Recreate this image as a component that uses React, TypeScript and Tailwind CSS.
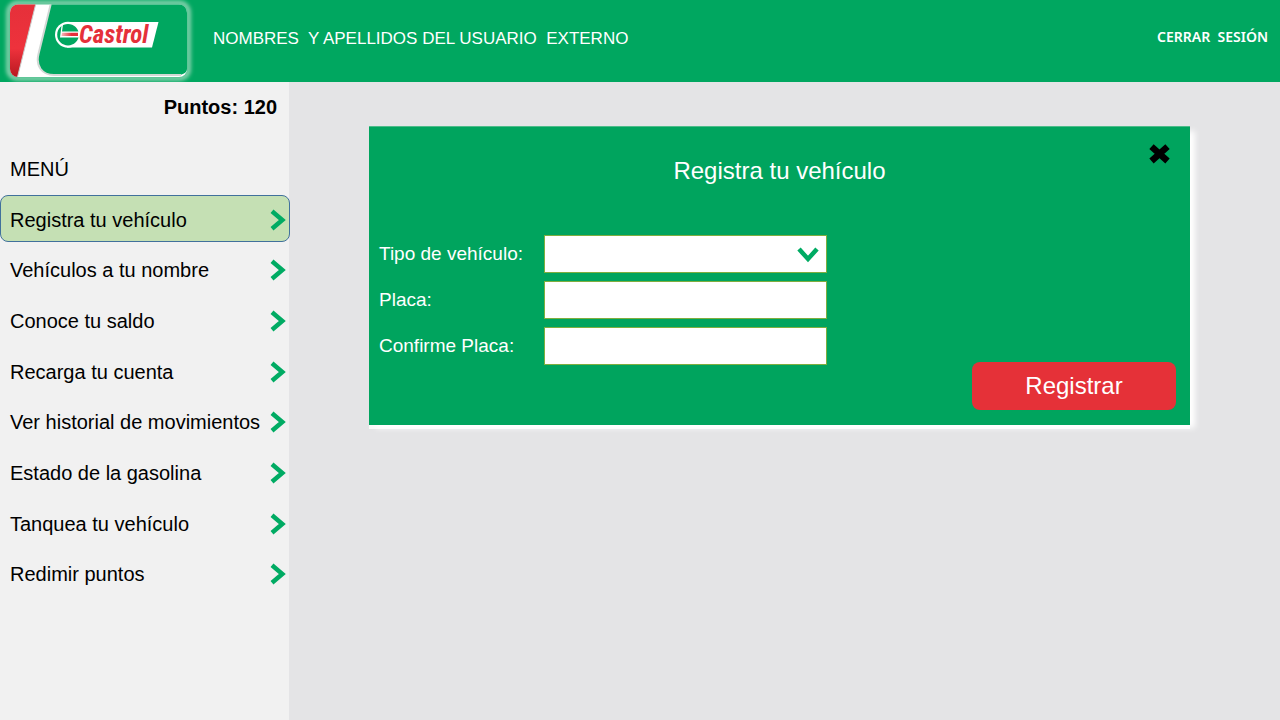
import { useState } from "react";

const menuItems = [
  "Registra tu vehículo",
  "Vehículos a tu nombre",
  "Conoce tu saldo",
  "Recarga tu cuenta",
  "Ver historial de movimientos",
  "Estado de la gasolina",
  "Tanquea tu vehículo",
  "Redimir puntos",
];

function Logo() {
  return (
    <svg width="200" height="82" viewBox="0 0 200 82" role="img" aria-label="Castrol">
      <defs>
        <linearGradient id="red" x1="0" y1="0" x2="0" y2="1">
          <stop offset="0" stopColor="#e5303a" />
          <stop offset="0.6" stopColor="#ee323c" />
          <stop offset="1" stopColor="#b5171f" />
        </linearGradient>
        <linearGradient id="bar" x1="0" y1="0" x2="1" y2="0">
          <stop offset="0" stopColor="#f6b9bc" />
          <stop offset="0.6" stopColor="#e5303a" />
        </linearGradient>
        <filter id="glow" x="-10%" y="-20%" width="120%" height="140%">
          <feGaussianBlur stdDeviation="2" />
        </filter>
        <clipPath id="badge">
          <rect x="10" y="4.5" width="177" height="72.500" rx="8" />
        </clipPath>
      </defs>
      <rect x="8.500" y="3" width="180" height="75.500" rx="9" fill="none" stroke="#b9e2cc" strokeWidth="3.500" filter="url(#glow)" />
      <g clipPath="url(#badge)">
        <rect x="10" y="4" width="178" height="74" fill="#fff" />
        <path d="M8 3H36L17 79H8Z" fill="url(#red)" />
        <path d="M36 3L17 79" stroke="#c9cccb" strokeWidth="1" />
        <path d="M51 3L38.500 54C35.500 66 42 75 54 75H179Q188 74 188 66V3Z" fill="#00a760" />
        <path d="M51 3L38.500 54C35.500 66 42 75 54 75H181" fill="none" stroke="#d3d8d5" strokeWidth="2" />
      </g>
      <path d="M67 22H158.500L152 47.500H67Z" fill="#fff" />
      <circle cx="68" cy="34.700" r="13" fill="#fff" />
      <circle cx="68" cy="34.700" r="10.800" fill="#00a760" />
      <path d="M60 37.500L61.500 25.500L63 24.500L62 31.500H79V37.500Z" fill="#fff" />
      <path d="M61.500 36L62 32.800H78V36Z" fill="url(#bar)" />
      <text x="79" y="43" fill="#e5303a" fontSize="25" fontWeight="700" fontStyle="italic" fontFamily="'Roboto Condensed', 'Liberation Sans Narrow', 'DejaVu Sans Condensed', sans-serif">
        Castrol
      </text>
    </svg>
  );
}

function Chevron() {
  return (
    <svg width="16" height="22" viewBox="0 0 16 22" fill="none" stroke="#00ab63" strokeWidth="4.500" aria-hidden="true">
      <path d="M2 2.300L12.300 11L2 19.700" />
    </svg>
  );
}

const fieldClass = "h-[38px] w-full rounded-none border border-[#7fae3f] bg-white px-2 text-[19px] text-black outline-none";

export default function App() {
  const [active, setActive] = useState(0);
  return (
    <div className="flex min-h-screen flex-col bg-[#e4e4e6] font-['Liberation_Sans',Arial,sans-serif] text-black">
      <header className="flex h-[82px] items-center bg-[#00a760] pr-3 text-white">
        <Logo />
        <p className="flex-1 pb-1 pl-[13px] text-[17px] leading-6">NOMBRES{"\u00a0"} Y APELLIDOS DEL USUARIO{"\u00a0"} EXTERNO</p>
        <a href="#salir" className="pb-2 font-['Noto_Sans',sans-serif] text-[14px] leading-5 font-semibold">
          CERRAR{"\u00a0"} SESIÓN
        </a>
      </header>

      <div className="flex flex-1">
        <aside className="w-[289px] shrink-0 bg-[#f1f1f1]">
          <p className="pt-[13px] pr-3 text-right text-[20px] leading-6 font-bold">Puntos: 120</p>
          <h2 className="mt-[38px] pl-2.5 text-[20px] leading-6">MENÚ</h2>
          <nav className="mt-3.5">
            <ul className="flex min-h-[402px] flex-col justify-between">
              {menuItems.map((item, i) => (
                <li key={item}>
                  <a
                    href="#menu"
                    onClick={() => setActive(i)}
                    className={
                      i === active
                        ? "-mr-px flex h-[47px] items-center justify-between rounded-lg border border-[#41719c] bg-[#c5e0b4] pt-0.5 pr-[3px] pl-[9px] text-[20px] leading-6"
                        : "flex h-[47px] items-center justify-between pt-0.5 pr-[3px] pl-2.5 text-[20px] leading-6"
                    }
                  >
                    <span>{item}</span>
                    <Chevron />
                  </a>
                </li>
              ))}
            </ul>
          </nav>
        </aside>

        <main className="flex-1 pt-11 pr-[90px] pl-20">
          <form
            onSubmit={(e) => e.preventDefault()}
            className="border-t border-[#4dbb8a] bg-[#00a45e] px-2.5 pt-4 pb-[15px] text-white shadow-[6px_4px_6px_-1px_#fff,0_4px_0_0_#fafafa]"
          >
            <div className="grid grid-cols-[1fr_auto_1fr] items-start">
              <h1 className="col-start-2 pt-3 text-[24px] leading-8">Registra tu vehículo</h1>
              <button type="button" aria-label="Cerrar" className="mr-2 justify-self-end">
                <svg width="24" height="24" viewBox="0 0 24 24" stroke="#000" strokeWidth="6.500" aria-hidden="true">
                  <path d="M3.500 3.700L19.500 18M19.500 3.700L3.500 18" />
                </svg>
              </button>
            </div>

            <div className="mt-12 flex items-end justify-between">
              <div className="grid grid-cols-[165px_283px] items-center gap-y-2 pb-[45px] text-[19px] leading-6">
                <label htmlFor="tipo">Tipo de vehículo:</label>
                <div className="relative">
                  <select id="tipo" defaultValue="" className={`${fieldClass} block appearance-none`}>
                    <option value=""></option>
                    <option>Carro</option>
                    <option>Moto</option>
                  </select>
                  <svg className="pointer-events-none absolute top-3 right-2" width="22" height="16" viewBox="0 0 22 16" fill="none" stroke="#00ab63" strokeWidth="4.500" aria-hidden="true">
                    <path d="M2 2L11 12L20 2" />
                  </svg>
                </div>
                <label htmlFor="placa">Placa:</label>
                <input id="placa" type="text" className={fieldClass} />
                <label htmlFor="confirme">Confirme Placa:</label>
                <input id="confirme" type="text" className={fieldClass} />
              </div>

              <button type="submit" className="mr-1 h-12 w-[204px] rounded-lg bg-[#e53138] text-[24px] leading-8">
                Registrar
              </button>
            </div>
          </form>
        </main>
      </div>
    </div>
  );
}
